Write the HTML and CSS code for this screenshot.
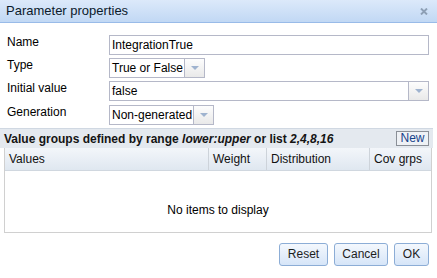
FILE: index.html
```html
<!DOCTYPE html>
<html>
<head>
<meta charset="utf-8">
<link rel="stylesheet" href="styles.css">
</head>
<body>
<div class="dlg">
  <div class="titlebar">
    <span class="title">Parameter properties</span>
    <svg class="close" width="8" height="7" viewBox="0 0 8 7"><path d="M1 0.5 L7 6.5 M7 0.5 L1 6.5" stroke="#8d9fb5" stroke-width="1.9"/></svg>
  </div>
  <div class="form">
    <div class="row"><label>Name</label><div class="field full"><span class="val">IntegrationTrue</span></div></div>
    <div class="row"><label>Type</label><div class="field combo w-type"><span class="val">True or False</span><span class="trig"></span></div></div>
    <div class="row"><label>Initial value</label><div class="field combo full"><span class="val">false</span><span class="trig"></span></div></div>
    <div class="row"><label>Generation</label><div class="field combo w-gen"><span class="val">Non-generated</span><span class="trig"></span></div></div>
  </div>
  <div class="grid">
    <div class="ghead">
      <span class="gtitle">Value groups defined by range <i>lower:upper</i> or list <i>2,4,8,16</i></span>
      <span class="newbtn">New</span>
    </div>
    <div class="gbox">
      <div class="gcols">
        <div class="col c1">Values</div>
        <div class="col c2">Weight</div>
        <div class="col c3">Distribution</div>
        <div class="col c4">Cov grps</div>
      </div>
      <div class="gbody">No items to display</div>
    </div>
  </div>
  <div class="buttons">
    <span class="btn b-reset">Reset</span>
    <span class="btn b-cancel">Cancel</span>
    <span class="btn b-ok">OK</span>
  </div>
</div>
</body>
</html>
```
FILE: styles.css
```css
html, body {
  margin: 0;
  padding: 0;
  background: #fff;
}
body {
  font-family: "Liberation Sans", Arial, sans-serif;
  font-size: 12px;
  color: #000;
  width: 437px;
  height: 278px;
  overflow: hidden;
}
.dlg {
  width: 437px;
}
.titlebar {
  height: 22px;
  border-bottom: 1px solid #99bbe8;
  background: linear-gradient(#dce9fa, #c1d8f4);
  display: flex;
  align-items: center;
  justify-content: space-between;
  padding: 0 9px 0 6px;
}
.title {
  font-size: 13px;
  color: #0b1a2b;
  line-height: 16px;
}
.close {
  display: block;
}
.form {
  padding: 12px 8px 0 7px;
  display: flex;
  flex-direction: column;
  gap: 3px;
}
.row {
  display: flex;
  align-items: flex-start;
  height: 20px;
}
.row:last-child {
  margin-top: 1px;
}
label {
  width: 102px;
  line-height: 14px;
  display: block;
}
.field {
  box-sizing: border-box;
  height: 20px;
  border: 1px solid #b5b8c8;
  background: #fff;
  display: flex;
  align-items: stretch;
}
.full { flex: 1; }
.w-type { width: 96px; }
.w-gen { width: 105px; }
.val {
  flex: 1;
  line-height: 18px;
  padding-left: 2px;
  white-space: nowrap;
  overflow: hidden;
}
.trig {
  width: 19px;
  border-left: 1px solid #b5b8c8;
  background: linear-gradient(#fdfdfd, #e9e9e9);
  position: relative;
}
.trig::after {
  content: "";
  position: absolute;
  left: 6px;
  top: 7px;
  border-left: 4px solid transparent;
  border-right: 4px solid transparent;
  border-top: 4px solid #9fb3cf;
}
.grid {
  margin-top: 3px;
}
.ghead {
  height: 19px;
  border-top: 1px solid #d0d8e2;
  background: #e4e9ef;
  display: flex;
  align-items: center;
  justify-content: space-between;
  padding: 0 4px 0 4px;
  width: 425px;
}
.gtitle {
  line-height: 14px;
  color: #141414;
  font-weight: bold;
}
.newbtn {
  box-sizing: border-box;
  width: 33px;
  height: 15px;
  border: 1px solid #8a8f97;
  line-height: 13px;
  text-align: center;
  color: #15428b;
  background: #eef1f5;
}
.gbox {
  margin: 0 5px 0 4px;
  border: 1px solid #d0d0d0;
  border-top: none;
}
.gcols {
  display: flex;
  height: 22px;
  background: linear-gradient(#f3f6fa, #dfe7f0);
  border-bottom: 1px solid #d0d7df;
}
.col {
  line-height: 22px;
  padding-left: 4px;
  color: #111;
  border-right: 1px solid #cdd3da;
  box-sizing: border-box;
}
.c1 { width: 204px; }
.c2 { width: 58px; }
.c3 { width: 103px; }
.c4 { flex: 1; border-right: none; }
.gbody {
  height: 61px;
  display: flex;
  align-items: center;
  justify-content: center;
  padding-top: 16px;
  box-sizing: border-box;
}
.buttons {
  display: flex;
  justify-content: flex-end;
  gap: 6px;
  padding: 10px 8px 0 0;
}
.btn {
  box-sizing: border-box;
  height: 23px;
  border: 1px solid #8cadd6;
  border-radius: 3px;
  background: linear-gradient(#f4f8fd, #d6e5f8);
  line-height: 21px;
  text-align: center;
  color: #1d1d1d;
}
.b-reset { width: 49px; }
.b-cancel { width: 54px; }
.b-ok { width: 35px; }
```
